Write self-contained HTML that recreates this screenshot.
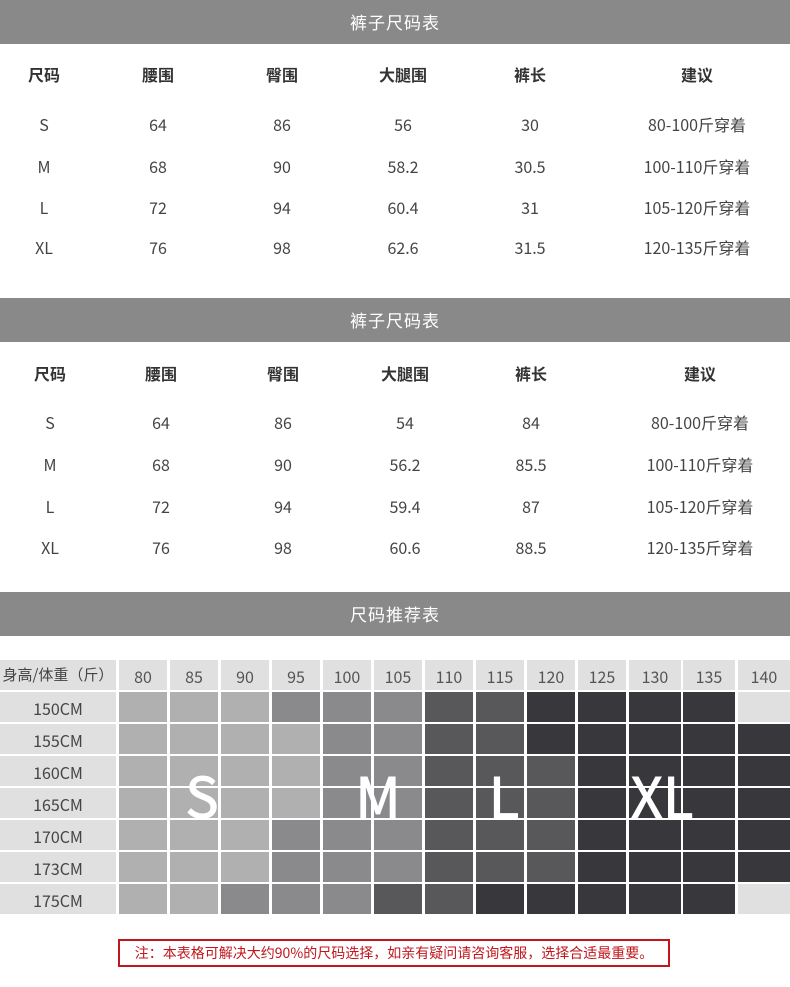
<!DOCTYPE html>
<html><head><meta charset="utf-8"><style>
body{margin:0;width:790px;height:987px;background:#fff;position:relative;overflow:hidden;font-family:"Noto Sans CJK SC","Liberation Sans",sans-serif;color:#333}
.bar{position:absolute;left:0;width:790px;height:44px;background:#898989;color:#fff;font-size:17px;text-align:center;line-height:44px;letter-spacing:1px}
.t{position:absolute;transform:translateX(-50%);font-size:16px;line-height:20px;white-space:nowrap;color:#444}
.h{font-weight:bold;color:#333}
.c{position:absolute;height:30px}
.lb{position:absolute;left:0;width:116px;height:30px;background:#e0e0e0;text-align:center;line-height:30px;font-size:16px;color:#444}
.big{position:absolute;color:#fff;font-size:56px;-webkit-text-stroke:1px #fff;transform:translate(-50%,-50%);line-height:1}
</style></head><body>
<div class="bar" style="top:0">裤子尺码表</div>
<div class="bar" style="top:298px">裤子尺码表</div>
<div class="bar" style="top:592px">尺码推荐表</div>

<div id="t1"></div>
<script>
(function(){
var out='';
function tbl(y0,cols,rows,ys){
 var hd=['尺码','腰围','臀围','大腿围','裤长','建议'];
 hd.forEach(function(h,i){out+='<div class="t h" style="left:'+cols[i]+'px;top:'+(y0-10)+'px">'+h+'</div>';});
 rows.forEach(function(r,j){r.forEach(function(v,i){out+='<div class="t" style="left:'+cols[i]+'px;top:'+(ys[j]-10)+'px">'+v+'</div>';});});
}
tbl(74,[44,158,282,403,530,697],[['S','64','86','56','30','80-100斤穿着'],['M','68','90','58.2','30.5','100-110斤穿着'],['L','72','94','60.4','31','105-120斤穿着'],['XL','76','98','62.6','31.5','120-135斤穿着']],[124,166,207,247]);
tbl(373,[50,161,283,405,531,700],[['S','64','86','54','84','80-100斤穿着'],['M','68','90','56.2','85.5','100-110斤穿着'],['L','72','94','59.4','87','105-120斤穿着'],['XL','76','98','60.6','88.5','120-135斤穿着']],[422,464,506,547]);
var L=[119,170,221,272,323,374,425,476,527,578,629,683,738],W=[48,48,48,48,48,48,48,48,48,48,52,52,52];
var hdr=['80','85','90','95','100','105','110','115','120','125','130','135','140'];
out+='<div class="lb" style="top:660px;font-size:15px">身高/体重（斤）</div>';
hdr.forEach(function(h,i){out+='<div class="c" style="left:'+L[i]+'px;top:660px;width:'+W[i]+'px;background:#e0e0e0;text-align:center;line-height:32px;font-size:16px;color:#555">'+h+'</div>';});
var col={a:'#b0b0b0',b:'#8a8a8c',c:'#58585a',d:'#38383c',e:'#e0e0e0'};
var g=['aaabbbccdddde','aaaabbccddddd','aaaabbcccdddd','aaaabbcccdddd','aaabbbcccdddd','aaabbbcccdddd','aabbbccddddde'];
var hs=['150CM','155CM','160CM','165CM','170CM','173CM','175CM'];
g.forEach(function(r,j){var y=692+32*j;
 out+='<div class="lb" style="top:'+y+'px;line-height:32px">'+hs[j]+'</div>';
 for(var i=0;i<13;i++)out+='<div class="c" style="left:'+L[i]+'px;top:'+y+'px;width:'+W[i]+'px;background:'+col[r[i]]+'"></div>';});
document.getElementById('t1').innerHTML=out;
})();
</script>
<div class="big" style="left:202px;top:795px">S</div>
<div class="big" style="left:378px;top:795px">M</div>
<div class="big" style="left:504px;top:795px">L</div>
<div class="big" style="left:662px;top:795px">XL</div>
<div style="position:absolute;left:118px;top:939px;width:548px;height:24px;border:2px solid #c0161c;color:#c0161c;font-size:14px;text-align:center;line-height:24px">注：本表格可解决大约90%的尺码选择，如亲有疑问请咨询客服，选择合适最重要。</div>
</body></html>
